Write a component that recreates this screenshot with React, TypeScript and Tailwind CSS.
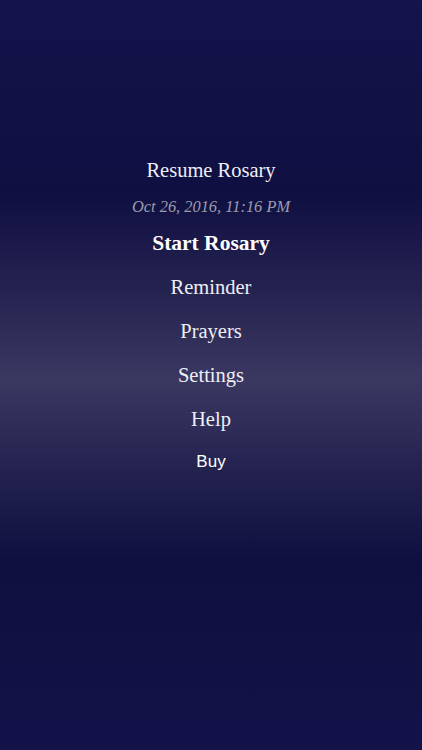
const serif = "font-['Liberation_Serif','Times_New_Roman',serif]";

const menu = ["Reminder", "Prayers", "Settings", "Help"];

export default function App() {
  return (
    <div className="min-h-[750px] w-full bg-[linear-gradient(to_bottom,#14144b_0%,#100f42_26%,#23224f_38%,#3a3861_50.5%,#23224f_63%,#0f0f3f_75%,#13134a_100%)] text-white">
      <div className="flex flex-col items-center pt-[158px]">
        <div className={`${serif} h-6 text-[20.5px] leading-6 text-[#eeeef5]`}>
          Resume Rosary
        </div>
        <div
          className={`${serif} mt-[13px] h-6 text-[16.4px] italic leading-6 text-[#9c9cad]`}
        >
          Oct 26, 2016, 11:16 PM
        </div>
        <div className={`${serif} mt-[12px] h-6 text-[21.5px] font-bold leading-6`}>
          Start Rosary
        </div>
        {menu.map((item) => (
          <div
            key={item}
            className={`${serif} mt-[20px] h-6 text-[20.5px] leading-6 text-[#eeeef5]`}
          >
            {item}
          </div>
        ))}
        <div className="mt-[19px] h-6 font-['Liberation_Sans',Arial,sans-serif] text-[17px] leading-6">
          Buy
        </div>
      </div>
    </div>
  );
}
